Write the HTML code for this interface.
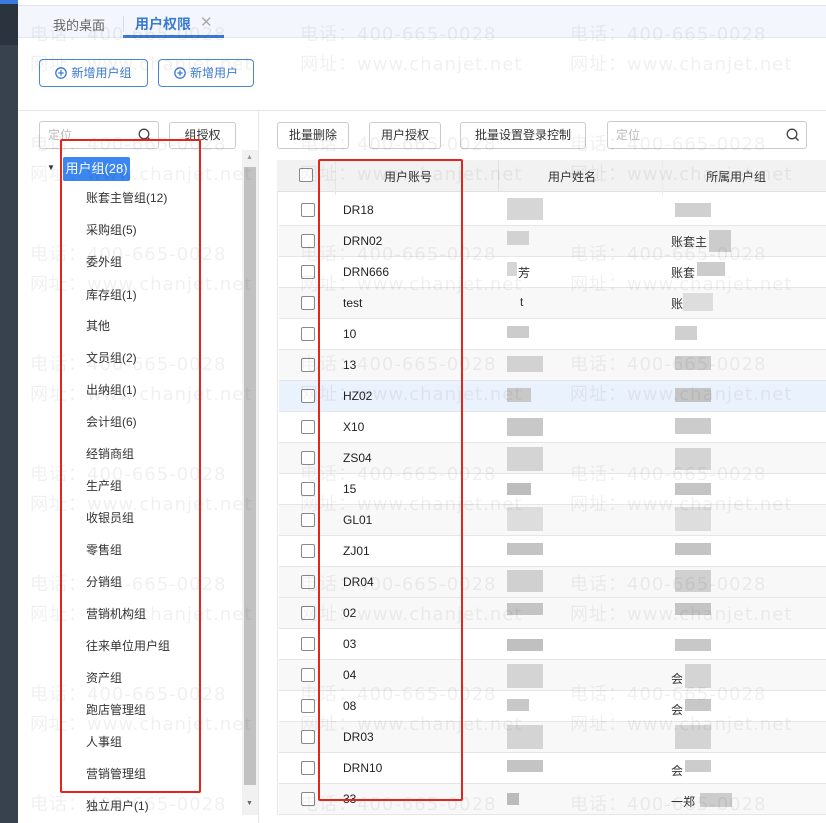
<!DOCTYPE html>
<html><head><meta charset="utf-8"><style>
*{margin:0;padding:0;box-sizing:border-box}
body{width:826px;height:823px;overflow:hidden;background:#fff;font-family:"Liberation Sans","Noto Sans CJK SC",sans-serif;font-size:12px;color:#333;position:relative}
.a{position:absolute}
.btn{position:absolute;border:1px solid #ccc;border-radius:3px;background:#fff;text-align:center;color:#333;font-size:12px}
.bbtn{position:absolute;border:1px solid #4a86d8;border-radius:4px;color:#3b7ad0;text-align:center;font-size:12px;line-height:24px}
.ci{display:inline-block;width:12px;height:12px;vertical-align:-2px;margin-right:4px}
.tr{position:absolute;left:86px;font-size:12px;color:#333}
.row{position:absolute;left:279px;width:547px;height:31px;border-bottom:1px solid #e6e6e6}
.cb{position:absolute;left:22px;top:8px;width:14px;height:14px;border:1px solid #888;border-radius:2px;background:#fff}
.acc{position:absolute;left:64px;top:8px;font-size:12px;color:#222}
.bl{position:absolute;background:#c8c8c8}
.wm{position:absolute;color:rgba(0,0,0,0.06);font-size:18px;letter-spacing:1px;white-space:nowrap;font-family:"DejaVu Sans","Noto Sans CJK SC",sans-serif}
.red{position:absolute;border:2px solid #e3261c;border-radius:2px}
.srch{position:absolute;right:6px;top:6px}
</style></head><body>
<div class="a" style="left:0;top:0;width:18px;height:45px;background:#2b333f"></div>
<div class="a" style="left:0;top:45px;width:18px;height:778px;background:#38424f"></div>
<div class="a" style="left:0;top:0;width:18px;height:4px;background:#3a7be0"></div>
<div class="a" style="left:18px;top:5px;width:808px;height:33px;background:#f3f6fc;border-top:1px solid #e0e4ea;border-bottom:1px solid #e3e7ee"></div>
<div class="a" style="left:53px;top:15px;font-size:13px;color:#666">我的桌面</div>
<div class="a" style="left:123px;top:16px;width:1px;height:16px;background:#d8dce4"></div>
<div class="a" style="left:135px;top:14px;font-size:14px;font-weight:bold;color:#3b7ad0">用户权限</div>
<div class="a" style="left:200px;top:13px;font-size:15px;color:#aaa">✕</div>
<div class="a" style="left:123px;top:35px;width:101px;height:3px;background:#3b7ad0"></div>
<div class="bbtn" style="left:39px;top:59px;width:109px;height:28px;line-height:26px"><svg class="ci" viewBox="0 0 12 12"><circle cx="6" cy="6" r="5.2" fill="none" stroke="#3b7ad0" stroke-width="1.3"/><path d="M3.3 6h5.4M6 3.3v5.4" stroke="#3b7ad0" stroke-width="1.3"/></svg>新增用户组</div>
<div class="bbtn" style="left:158px;top:59px;width:96px;height:28px;line-height:26px"><svg class="ci" viewBox="0 0 12 12"><circle cx="6" cy="6" r="5.2" fill="none" stroke="#3b7ad0" stroke-width="1.3"/><path d="M3.3 6h5.4M6 3.3v5.4" stroke="#3b7ad0" stroke-width="1.3"/></svg>新增用户</div>
<div class="a" style="left:18px;top:110px;width:808px;height:1px;background:#e6e6e6"></div>
<div class="a" style="left:258px;top:111px;width:1px;height:712px;background:#e6e6e6"></div>
<!-- left -->
<div class="btn" style="left:39px;top:121px;width:120px;height:28px;text-align:left;padding-left:8px;line-height:26px;color:#bbb">定位<svg class="srch" width="14" height="14" viewBox="0 0 14 14"><circle cx="6" cy="6" r="4.8" fill="none" stroke="#444" stroke-width="1.3"/><path d="M9.5 9.5l3 3" stroke="#444" stroke-width="1.4"/></svg></div>
<div class="btn" style="left:169px;top:122px;width:67px;height:27px;line-height:25px">组授权</div>
<div class="a" style="left:47px;top:163px;font-size:8px;color:#333">▼</div>
<div class="a" style="left:63px;top:157px;width:67px;height:24px;background:#3b86f0;color:#fff;border-radius:2px;line-height:24px;text-align:center;font-size:13px">用户组(28)</div>
<div class="tr" style="top:189px">账套主管组(12)</div>
<div class="tr" style="top:221px">采购组(5)</div>
<div class="tr" style="top:253px">委外组</div>
<div class="tr" style="top:286px">库存组(1)</div>
<div class="tr" style="top:317px">其他</div>
<div class="tr" style="top:349px">文员组(2)</div>
<div class="tr" style="top:381px">出纳组(1)</div>
<div class="tr" style="top:413px">会计组(6)</div>
<div class="tr" style="top:445px">经销商组</div>
<div class="tr" style="top:477px">生产组</div>
<div class="tr" style="top:509px">收银员组</div>
<div class="tr" style="top:541px">零售组</div>
<div class="tr" style="top:573px">分销组</div>
<div class="tr" style="top:605px">营销机构组</div>
<div class="tr" style="top:637px">往来单位用户组</div>
<div class="tr" style="top:669px">资产组</div>
<div class="tr" style="top:701px">跑店管理组</div>
<div class="tr" style="top:733px">人事组</div>
<div class="tr" style="top:765px">营销管理组</div>
<div class="tr" style="top:797px">独立用户(1)</div>
<div class="a" style="left:242px;top:150px;width:16px;height:665px;background:#f1f1f1"></div>
<div class="a" style="left:244px;top:167px;width:12px;height:618px;background:#c1c1c1"></div>
<div class="a" style="left:246px;top:154px;font-size:7px;color:#999">▲</div>
<div class="a" style="left:246px;top:800px;font-size:7px;color:#666">▼</div>
<!-- right -->
<div class="btn" style="left:277px;top:122px;width:72px;height:27px;line-height:25px">批量删除</div>
<div class="btn" style="left:369px;top:122px;width:72px;height:27px;line-height:25px">用户授权</div>
<div class="btn" style="left:460px;top:122px;width:126px;height:27px;line-height:25px">批量设置登录控制</div>
<div class="btn" style="left:607px;top:121px;width:200px;height:28px;text-align:left;padding-left:8px;line-height:26px;color:#bbb">定位<svg class="srch" width="14" height="14" viewBox="0 0 14 14"><circle cx="6" cy="6" r="4.8" fill="none" stroke="#444" stroke-width="1.3"/><path d="M9.5 9.5l3 3" stroke="#444" stroke-width="1.4"/></svg></div>
<div class="a" style="left:277px;top:160px;width:549px;height:32px;background:#f2f2f2;border-bottom:1px solid #e0e0e0"></div>
<div class="a" style="left:299px;top:168px;width:14px;height:14px;border:1px solid #888;border-radius:2px;background:#fff"></div>
<div class="a" style="left:335px;top:160px;width:1px;height:655px;background:#e6e6e6"></div>
<div class="a" style="left:498px;top:160px;width:1px;height:32px;background:#e0e0e0"></div>
<div class="a" style="left:662px;top:160px;width:1px;height:655px;background:#ececec"></div>
<div class="a" style="left:384px;top:168px;font-size:12px">用户账号</div>
<div class="a" style="left:548px;top:168px;font-size:12px">用户姓名</div>
<div class="a" style="left:706px;top:168px;font-size:12px">所属用户组</div>
<div class="a" style="left:277px;top:192px;width:1px;height:623px;background:#e6e6e6"></div>

<div class="row" style="top:195px;background:#fff"><div class="cb"></div><div class="acc">DR18</div></div>
<div class="row" style="top:226px;background:#f8f8f8"><div class="cb"></div><div class="acc">DRN02</div></div>
<div class="row" style="top:257px;background:#fff"><div class="cb"></div><div class="acc">DRN666</div></div>
<div class="row" style="top:288px;background:#f8f8f8"><div class="cb"></div><div class="acc">test</div></div>
<div class="row" style="top:319px;background:#fff"><div class="cb"></div><div class="acc">10</div></div>
<div class="row" style="top:350px;background:#f8f8f8"><div class="cb"></div><div class="acc">13</div></div>
<div class="row" style="top:381px;background:#eaf2fd"><div class="cb"></div><div class="acc">HZ02</div></div>
<div class="row" style="top:412px;background:#fff"><div class="cb"></div><div class="acc">X10</div></div>
<div class="row" style="top:443px;background:#f8f8f8"><div class="cb"></div><div class="acc">ZS04</div></div>
<div class="row" style="top:474px;background:#fff"><div class="cb"></div><div class="acc">15</div></div>
<div class="row" style="top:505px;background:#f8f8f8"><div class="cb"></div><div class="acc">GL01</div></div>
<div class="row" style="top:536px;background:#fff"><div class="cb"></div><div class="acc">ZJ01</div></div>
<div class="row" style="top:567px;background:#f8f8f8"><div class="cb"></div><div class="acc">DR04</div></div>
<div class="row" style="top:598px;background:#f8f8f8"><div class="cb"></div><div class="acc">02</div></div>
<div class="row" style="top:629px;background:#fff"><div class="cb"></div><div class="acc">03</div></div>
<div class="row" style="top:660px;background:#f8f8f8"><div class="cb"></div><div class="acc">04</div></div>
<div class="row" style="top:691px;background:#fff"><div class="cb"></div><div class="acc">08</div></div>
<div class="row" style="top:722px;background:#f8f8f8"><div class="cb"></div><div class="acc">DR03</div></div>
<div class="row" style="top:753px;background:#fff"><div class="cb"></div><div class="acc">DRN10</div></div>
<div class="row" style="top:784px;background:#f8f8f8"><div class="cb"></div><div class="acc">33</div></div>

<!-- blurred blocks -->
<div class="bl" style="left:507px;top:198px;width:36px;height:22px;background:#d6d6d6"></div>
<div class="bl" style="left:675px;top:203px;width:36px;height:14px;background:#d0d0d0"></div>
<div class="a" style="left:671px;top:233px;font-size:12px">账套主</div>
<div class="bl" style="left:709px;top:230px;width:22px;height:22px;background:#ccc"></div>
<div class="bl" style="left:507px;top:231px;width:22px;height:14px;background:#d2d2d2"></div>
<div class="a" style="left:518px;top:264px">芳</div><div class="bl" style="left:507px;top:262px;width:10px;height:14px;background:#d6d6d6"></div>
<div class="a" style="left:671px;top:264px">账套</div><div class="bl" style="left:697px;top:262px;width:28px;height:14px;background:#ccc"></div>
<div class="a" style="left:520px;top:295px">t</div>
<div class="a" style="left:671px;top:295px">账</div><div class="bl" style="left:683px;top:293px;width:30px;height:18px;background:#ddd"></div>
<div class="bl" style="left:507px;top:326px;width:22px;height:12px;background:#ccc"></div>
<div class="bl" style="left:675px;top:326px;width:22px;height:14px;background:#d0d0d0"></div>
<div class="bl" style="left:507px;top:356px;width:36px;height:16px;background:#d2d2d2"></div>
<div class="bl" style="left:675px;top:356px;width:36px;height:14px;background:#ccc"></div>
<div class="bl" style="left:507px;top:388px;width:24px;height:14px;background:#c8c8c8"></div>
<div class="bl" style="left:675px;top:388px;width:36px;height:14px;background:#c4c4c4"></div>
<div class="bl" style="left:507px;top:418px;width:36px;height:18px;background:#c8c8c8"></div>
<div class="bl" style="left:675px;top:418px;width:36px;height:16px;background:#ccc"></div>
<div class="bl" style="left:507px;top:447px;width:36px;height:24px;background:#d4d4d4"></div>
<div class="bl" style="left:675px;top:448px;width:36px;height:22px;background:#d4d4d4"></div>
<div class="bl" style="left:507px;top:483px;width:24px;height:12px;background:#bdbdbd"></div>
<div class="bl" style="left:675px;top:483px;width:36px;height:12px;background:#c4c4c4"></div>
<div class="bl" style="left:507px;top:507px;width:36px;height:24px;background:#ddd"></div>
<div class="bl" style="left:675px;top:507px;width:36px;height:24px;background:#ddd"></div>
<div class="bl" style="left:507px;top:543px;width:36px;height:12px;background:#c4c4c4"></div>
<div class="bl" style="left:675px;top:543px;width:36px;height:12px;background:#c4c4c4"></div>
<div class="bl" style="left:507px;top:570px;width:36px;height:22px;background:#d0d0d0"></div>
<div class="bl" style="left:675px;top:570px;width:36px;height:22px;background:#d0d0d0"></div>
<div class="bl" style="left:507px;top:603px;width:36px;height:12px;background:#c4c4c4"></div>
<div class="bl" style="left:675px;top:603px;width:36px;height:12px;background:#c4c4c4"></div>
<div class="bl" style="left:507px;top:639px;width:36px;height:12px;background:#c0c0c0"></div>
<div class="bl" style="left:675px;top:639px;width:36px;height:12px;background:#c8c8c8"></div>
<div class="bl" style="left:507px;top:664px;width:36px;height:24px;background:#d4d4d4"></div>
<div class="a" style="left:671px;top:670px">会</div><div class="bl" style="left:685px;top:664px;width:26px;height:24px;background:#d4d4d4"></div>
<div class="bl" style="left:507px;top:699px;width:22px;height:12px;background:#c8c8c8"></div>
<div class="a" style="left:671px;top:701px">会</div><div class="bl" style="left:685px;top:699px;width:26px;height:12px;background:#c8c8c8"></div>
<div class="bl" style="left:507px;top:725px;width:36px;height:24px;background:#d4d4d4"></div>
<div class="bl" style="left:675px;top:725px;width:36px;height:24px;background:#d4d4d4"></div>
<div class="bl" style="left:507px;top:760px;width:36px;height:12px;background:#c4c4c4"></div>
<div class="a" style="left:671px;top:762px">会</div><div class="bl" style="left:685px;top:760px;width:26px;height:12px;background:#ccc"></div>
<div class="bl" style="left:507px;top:793px;width:12px;height:12px;background:#bbb"></div>
<div class="a" style="left:671px;top:793px">一郑</div><div class="bl" style="left:700px;top:793px;width:32px;height:14px;background:#ccc"></div>

<!-- watermarks -->
<div class="wm" style="left:30px;top:20px">电话：400-665-0028</div><div class="wm" style="left:300px;top:20px">电话：400-665-0028</div><div class="wm" style="left:570px;top:20px">电话：400-665-0028</div>
<div class="wm" style="left:30px;top:50px">网址：www.chanjet.net</div><div class="wm" style="left:300px;top:50px">网址：www.chanjet.net</div><div class="wm" style="left:570px;top:50px">网址：www.chanjet.net</div>
<div class="wm" style="left:30px;top:130px">电话：400-665-0028</div><div class="wm" style="left:300px;top:130px">电话：400-665-0028</div><div class="wm" style="left:570px;top:130px">电话：400-665-0028</div>
<div class="wm" style="left:30px;top:160px">网址：www.chanjet.net</div><div class="wm" style="left:300px;top:160px">网址：www.chanjet.net</div><div class="wm" style="left:570px;top:160px">网址：www.chanjet.net</div>
<div class="wm" style="left:30px;top:240px">电话：400-665-0028</div><div class="wm" style="left:300px;top:240px">电话：400-665-0028</div><div class="wm" style="left:570px;top:240px">电话：400-665-0028</div>
<div class="wm" style="left:30px;top:270px">网址：www.chanjet.net</div><div class="wm" style="left:300px;top:270px">网址：www.chanjet.net</div><div class="wm" style="left:570px;top:270px">网址：www.chanjet.net</div>
<div class="wm" style="left:30px;top:350px">电话：400-665-0028</div><div class="wm" style="left:300px;top:350px">电话：400-665-0028</div><div class="wm" style="left:570px;top:350px">电话：400-665-0028</div>
<div class="wm" style="left:30px;top:380px">网址：www.chanjet.net</div><div class="wm" style="left:300px;top:380px">网址：www.chanjet.net</div><div class="wm" style="left:570px;top:380px">网址：www.chanjet.net</div>
<div class="wm" style="left:30px;top:460px">电话：400-665-0028</div><div class="wm" style="left:300px;top:460px">电话：400-665-0028</div><div class="wm" style="left:570px;top:460px">电话：400-665-0028</div>
<div class="wm" style="left:30px;top:490px">网址：www.chanjet.net</div><div class="wm" style="left:300px;top:490px">网址：www.chanjet.net</div><div class="wm" style="left:570px;top:490px">网址：www.chanjet.net</div>
<div class="wm" style="left:30px;top:570px">电话：400-665-0028</div><div class="wm" style="left:300px;top:570px">电话：400-665-0028</div><div class="wm" style="left:570px;top:570px">电话：400-665-0028</div>
<div class="wm" style="left:30px;top:600px">网址：www.chanjet.net</div><div class="wm" style="left:300px;top:600px">网址：www.chanjet.net</div><div class="wm" style="left:570px;top:600px">网址：www.chanjet.net</div>
<div class="wm" style="left:30px;top:680px">电话：400-665-0028</div><div class="wm" style="left:300px;top:680px">电话：400-665-0028</div><div class="wm" style="left:570px;top:680px">电话：400-665-0028</div>
<div class="wm" style="left:30px;top:710px">网址：www.chanjet.net</div><div class="wm" style="left:300px;top:710px">网址：www.chanjet.net</div><div class="wm" style="left:570px;top:710px">网址：www.chanjet.net</div>
<div class="wm" style="left:30px;top:790px">电话：400-665-0028</div><div class="wm" style="left:300px;top:790px">电话：400-665-0028</div><div class="wm" style="left:570px;top:790px">电话：400-665-0028</div>

<div class="red" style="left:60px;top:139px;width:141px;height:654px"></div>
<div class="red" style="left:318px;top:159px;width:145px;height:642px"></div>
</body></html>
